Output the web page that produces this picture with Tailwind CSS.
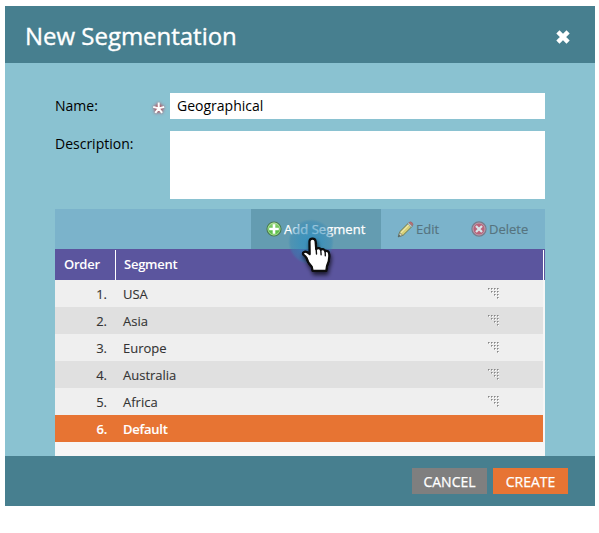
<!DOCTYPE html>
<html lang="en">
<head>
<meta charset="utf-8">
<title>New Segmentation</title>
<script src="https://cdn.jsdelivr.net/npm/@tailwindcss/browser@4"></script>
</head>
<body class="bg-white overflow-hidden font-['Open_Sans',sans-serif]">
<svg class="hidden">
  <symbol id="grip" viewBox="0 0 12 12">
    <g fill="#fff"><path d="M1 1h1v1h-1zM4 1h1v1h-1zM7 1h1v1h-1zM10 1h1v1h-1zM4 4h1v1h-1zM7 4h1v1h-1zM10 4h1v1h-1zM7 7h1v1h-1zM10 7h1v1h-1zM10 10h1v1h-1z"/></g>
    <g fill="#858585"><path d="M0 0h1v1h-1zM3 0h1v1h-1zM6 0h1v1h-1zM9 0h1v1h-1zM3 3h1v1h-1zM6 3h1v1h-1zM9 3h1v1h-1zM6 6h1v1h-1zM9 6h1v1h-1zM9 9h1v1h-1z"/></g>
    <g fill="#b0b0b0"><path d="M1 0h1v1h-1zM4 0h1v1h-1zM7 0h1v1h-1zM10 0h1v1h-1zM4 3h1v1h-1zM7 3h1v1h-1zM10 3h1v1h-1zM7 6h1v1h-1zM10 6h1v1h-1zM10 9h1v1h-1zM0 1h1v1h-1zM3 1h1v1h-1zM6 1h1v1h-1zM9 1h1v1h-1zM3 4h1v1h-1zM6 4h1v1h-1zM9 4h1v1h-1zM6 7h1v1h-1zM9 7h1v1h-1zM9 10h1v1h-1z"/></g>
  </symbol>
</svg>
<main class="ml-[5px] mt-[6px] w-[590px] h-[500px] flex flex-col bg-[#8ac2d1]">
  <header class="h-[57px] shrink-0 bg-[#477f8f] flex items-center justify-between pl-5 pr-[24px]">
    <h1 class="text-white text-[24px] leading-[30px] tracking-[-0.02px] pt-[3px] [-webkit-text-stroke:0.35px_white]">New Segmentation</h1>
    <svg class="w-4 h-4 mt-[5px]" viewBox="0 0 16 16"><path d="M2.9 2.9l10.2 10.2M13.1 2.9l-10.2 10.2" stroke="#fff" stroke-width="4.5"/></svg>
  </header>

  <section class="h-[393px] shrink-0 px-[50px] pt-[30px] flex flex-col overflow-hidden">
    <div class="h-[26px] flex shrink-0 text-[14px] leading-[26px] text-black">
      <label class="w-[97px]">Name:</label>
      <svg class="w-[18px] h-[26px] overflow-visible" viewBox="0 0 18 26">
        <defs><filter id="redglow" x="-60%" y="-60%" width="220%" height="220%"><feGaussianBlur stdDeviation="1.7"/></filter></defs>
        <path d="M6.7 15.5V10M6.7 15.5l-5-1.7M6.7 15.5l5-1.7M6.7 15.5l-3.4 4.2M6.7 15.5l3.4 4.2" stroke="#b83b45" stroke-opacity=".85" stroke-width="3.4" filter="url(#redglow)"/>
        <path d="M6.7 15.4V9.6M6.7 15.4l-5.5-1.5M6.7 15.4l5.5-1.5M6.7 15.4l-3.4 4.4M6.7 15.4l3.4 4.4" stroke="#fff" stroke-width="2"/>
      </svg>
      <div class="flex-1 bg-white pl-[7px]">Geographical</div>
    </div>
    <div class="mt-3 h-[68px] flex shrink-0 text-[14px] leading-[26px] text-black">
      <label class="w-[115px]">Description:</label>
      <div class="flex-1 bg-white"></div>
    </div>

    <div class="mt-[10px] h-10 shrink-0 bg-[#7bb3cb] flex justify-end text-[13px] leading-5">
      <button class="w-[130px] bg-[#649cb1] flex items-center pl-[15px] text-white tracking-[0.04px] whitespace-nowrap [-webkit-text-stroke:0.25px_white]">
        <svg class="w-4 h-4 mr-[2px] shrink-0" viewBox="0 0 16 16">
          <defs><linearGradient id="green" x2="0" y2="1"><stop stop-color="#a5dc87"/><stop offset=".55" stop-color="#55bb45"/><stop offset="1" stop-color="#70ca56"/></linearGradient></defs>
          <circle cx="8" cy="8" r="7" fill="url(#green)" stroke="#4b7953" stroke-width="1.2"/><circle cx="8" cy="8" r="6" fill="none" stroke="#c7ecb5" stroke-width=".6"/>
          <path d="M8 3.2v9.6M3.2 8h9.6" stroke="#fff" stroke-width="2.6"/>
        </svg>Add Segment
      </button>
      <button class="w-[75px] flex items-center pl-[16px] text-[#56737f] [-webkit-text-stroke:0.15px_#56737f]">
        <svg class="w-[17px] h-[17px] mr-[2px]" viewBox="0 0 17 17">
          <path d="M1.3 15.8l1.4-5L11.5 2l3.5 3.5-8.8 8.7z" fill="#d6cf77" stroke="#6b7854"/>
          <path d="M3.9 11.8L12 3.7" stroke="#eee9ac" stroke-width="1.2"/>
          <path d="M1.3 15.8l1.4-4.3 3 2.8z" fill="#e2d8b6" stroke="#687b76" stroke-width=".7"/><path d="M1 16l1-2.4 1.4 1.5z" fill="#465a62"/>
          <path d="M10.7 2.8l1.2-1.2 3.5 3.4-1.3 1.3z" fill="#b9cbd0" stroke="#718d98" stroke-width=".5"/>
          <path d="M11.9 1.6q1.5-1.5 3.2 0t.3 3.4z" fill="#bd6f71" stroke="#93656b" stroke-width=".6"/>
        </svg>Edit
      </button>
      <button class="w-[89px] flex items-center pl-[15px] text-[#56737f] [-webkit-text-stroke:0.15px_#56737f]">
        <svg class="w-4 h-4 mr-[2px]" viewBox="0 0 16 16">
          <circle cx="8" cy="8" r="7" fill="#b9647a" stroke="#767d8c" stroke-width="1.3"/><circle cx="8" cy="8" r="6" fill="none" stroke="#b8a6b4" stroke-width=".9"/>
          <path d="M5 5l6 6M11 5l-6 6" stroke="#d9e5e9" stroke-width="2.2"/>
        </svg>Delete
      </button>
    </div>

    <div class="h-[207px] shrink-0 bg-[#f6f6f6] text-[13px] text-[#333]">
      <div class="h-[31px] bg-[#5b559e] text-white font-semibold tracking-[-0.25px] flex pr-px pt-px">
        <div class="w-[61px] pl-[9px] border-r border-white leading-[29px]">Order</div>
        <div class="flex-1 pl-2 border-r border-white leading-[29px]">Segment</div>
      </div>
      <div class="w-[488px] leading-[28px] [-webkit-text-stroke:0.1px_currentColor]">
        <div class="h-[27px] flex bg-[#efefef]"><span class="w-[52px] text-right">1.</span><span class="w-[381px] pl-4">USA</span><svg class="w-3 h-3 mt-2"><use href="#grip"/></svg></div>
        <div class="h-[27px] flex bg-[#e0e0e0]"><span class="w-[52px] text-right">2.</span><span class="w-[381px] pl-4">Asia</span><svg class="w-3 h-3 mt-2"><use href="#grip"/></svg></div>
        <div class="h-[27px] flex bg-[#efefef]"><span class="w-[52px] text-right">3.</span><span class="w-[381px] pl-4">Europe</span><svg class="w-3 h-3 mt-2"><use href="#grip"/></svg></div>
        <div class="h-[27px] flex bg-[#e0e0e0]"><span class="w-[52px] text-right">4.</span><span class="w-[381px] pl-4">Australia</span><svg class="w-3 h-3 mt-2"><use href="#grip"/></svg></div>
        <div class="h-[27px] flex bg-[#efefef]"><span class="w-[52px] text-right">5.</span><span class="w-[381px] pl-4">Africa</span><svg class="w-3 h-3 mt-2"><use href="#grip"/></svg></div>
        <div class="h-[27px] flex bg-[#e77433] text-white font-semibold tracking-[-0.25px]"><span class="w-[52px] text-right">6.</span><span class="pl-4">Default</span></div>
      </div>
    </div>
  </section>

  <footer class="h-[50px] shrink-0 bg-[#477f8f] flex items-center justify-end gap-[6px] pr-[27px] text-[14px] text-white [-webkit-text-stroke:0.25px_white]">
    <button class="w-[75px] h-[26px] bg-[#7f7f7f] leading-[27px]">CANCEL</button>
    <button class="w-[75px] h-[26px] bg-[#e77433] leading-[27px]">CREATE</button>
  </footer>
</main>

<!-- pointer with click highlight -->
<svg class="absolute left-[285px] top-[215px] w-[56px] h-[68px] pointer-events-none" viewBox="0 0 56 68">
  <defs>
    <radialGradient id="click"><stop stop-color="#2a8fc4" stop-opacity=".75"/><stop offset=".5" stop-color="#2c8cbd" stop-opacity=".6"/><stop offset=".88" stop-color="#3388b5" stop-opacity=".42"/><stop offset="1" stop-color="#3388b5" stop-opacity="0"/></radialGradient>
    <filter id="shadow" x="-40%" y="-30%" width="180%" height="170%"><feDropShadow dx="1" dy="3" stdDeviation="2" flood-color="#000" flood-opacity=".7"/></filter>
  </defs>
  <circle cx="26" cy="27" r="23" fill="url(#click)"/>
  <path d="M24.5 26.5c0-3.7 5.9-3.7 6.1 0l.6 7.6c1-1.7 4.2-1.2 4.6.8 1.2-1.4 4-.8 4.4 1.4 1.8-1 3.9.1 4 2.6.5 4.8-.3 8.2-2.2 12l-.7 5H27.6l-.8-4c-2.5-2.2-4.3-5.3-5.3-9.1-1-1.5-1.9-2.2-3.2-3.2-1.3-1.8 1.3-3.7 3.8-2.4l2.6 1.8z" fill="#fff" stroke="#080808" stroke-width="2.2" stroke-linejoin="round" filter="url(#shadow)"/>
  <path d="M31.2 34.5l.3 4.5M35.8 35.5l.3 4.2M40.2 37l.1 3.7" stroke="#111" stroke-width="1.4" stroke-linecap="round"/>
</svg>
</body>
</html>
